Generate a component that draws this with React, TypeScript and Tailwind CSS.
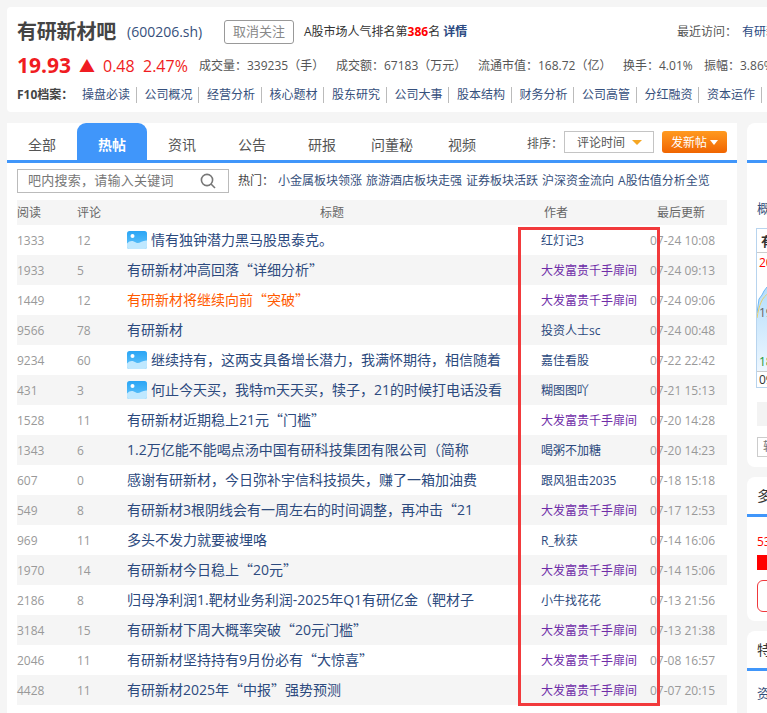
import { Fragment } from "react";

const f10Links = ["操盘必读", "公司概况", "经营分析", "核心题材", "股东研究", "公司大事", "股本结构", "财务分析", "公司高管", "分红融资", "资本运作"];
const tabs = ["全部", "热帖", "资讯", "公告", "研报", "问董秘", "视频"];
const hotLinks = ["小金属板块领涨", "旅游酒店板块走强", "证券板块活跃", "沪深资金流向", "A股估值分析全览"];

type Post = { reads: number; comments: number; title: string; author: string; time: string; pic?: boolean; hot?: boolean };

const QS = "大发富贵千手扉间";
const posts: Post[] = [
  { reads: 1333, comments: 12, title: "情有独钟潜力黑马股思泰克。", author: "红灯记3", time: "07-24 10:08", pic: true },
  { reads: 1933, comments: 5, title: "有研新材冲高回落“详细分析”", author: QS, time: "07-24 09:13" },
  { reads: 1449, comments: 12, title: "有研新材将继续向前“突破”", author: QS, time: "07-24 09:06", hot: true },
  { reads: 9566, comments: 78, title: "有研新材", author: "投资人士sc", time: "07-24 00:48" },
  { reads: 9234, comments: 60, title: "继续持有，这两支具备增长潜力，我满怀期待，相信随着", author: "嘉佳看股", time: "07-22 22:42", pic: true },
  { reads: 431, comments: 3, title: "何止今天买，我特m天天买，犊子，21的时候打电话没看", author: "糊图图吖", time: "07-21 15:13", pic: true },
  { reads: 1528, comments: 11, title: "有研新材近期稳上21元“门槛”", author: QS, time: "07-20 14:28" },
  { reads: 1343, comments: 6, title: "1.2万亿能不能喝点汤中国有研科技集团有限公司（简称", author: "喝粥不加糖", time: "07-20 14:23" },
  { reads: 607, comments: 0, title: "感谢有研新材，今日弥补宇信科技损失，赚了一箱加油费", author: "跟风狙击2035", time: "07-18 15:18" },
  { reads: 549, comments: 8, title: "有研新材3根阴线会有一周左右的时间调整，再冲击“21", author: QS, time: "07-17 12:53" },
  { reads: 969, comments: 11, title: "多头不发力就要被埋咯", author: "R_秋获", time: "07-14 16:06" },
  { reads: 1970, comments: 14, title: "有研新材今日稳上“20元”", author: QS, time: "07-14 15:06" },
  { reads: 2186, comments: 8, title: "归母净利润1.靶材业务利润-2025年Q1有研亿金（靶材子", author: "小牛找花花", time: "07-13 21:56" },
  { reads: 3184, comments: 15, title: "有研新材下周大概率突破“20元门槛”", author: QS, time: "07-13 21:38" },
  { reads: 2046, comments: 11, title: "有研新材坚持持有9月份必有“大惊喜”", author: QS, time: "07-08 16:57" },
  { reads: 4428, comments: 11, title: "有研新材2025年“中报”强势预测", author: QS, time: "07-07 20:15" },
];

// Open Sans has narrow curly quotes, the CJK font has the full width ones
function TitleText({ text }: { text: string }) {
  const parts = text.split(/([“”])/);
  return (
    <>
      {parts.map((part, i) =>
        part === "“" || part === "”" ? (
          <span key={i} lang="zh-CN" className="font-['Noto_Sans_CJK_SC']">{part}</span>
        ) : (
          <Fragment key={i}>{part}</Fragment>
        ),
      )}
    </>
  );
}

function PicIcon() {
  return (
    <svg width="20" height="18" viewBox="0 0 20 18" className="mr-[4px] shrink-0">
      <defs>
        <linearGradient id="picBg" x1="0" y1="0" x2="0" y2="1">
          <stop offset="0" stopColor="#2aa5f5" />
          <stop offset="1" stopColor="#66c6fb" />
        </linearGradient>
      </defs>
      <rect width="20" height="18" rx="2.5" fill="url(#picBg)" />
      <circle cx="5.5" cy="5" r="2" fill="#ffffff" />
      <path d="M0 12.5C3 9 6 9.5 9 11.5C12 13.5 15 9 20 9.5V15.5A2.5 2.5 0 0 1 17.5 18H2.5A2.5 2.5 0 0 1 0 15.5Z" fill="#bfe8ff" />
    </svg>
  );
}

function Header() {
  return (
    <div className="h-[105px] w-[800px] shrink-0 rounded-[4px] bg-white pl-[10px]">
      <div className="flex h-[48px] items-center pt-[1px]">
        <span className="w-[110px] text-[20px] font-bold tracking-[-0.2px] text-[#444]">有研新材吧</span>
        <span className="w-[97px] text-[14px] text-[#36507c]">(600206.sh)</span>
        <span className="flex h-[24px] w-[70px] items-center justify-center rounded-[3px] border border-[#999] text-[13px] text-[#888]">取消关注</span>
        <span className="ml-[10px] w-[373px] text-[12px] text-[#333]">
          A股市场人气排名第<b className="text-[#f00]">386</b>名 <b className="font-bold text-[#2c4a82]">详情</b>
        </span>
        <span className="w-[65px] text-[12px] text-[#555]">最近访问：</span>
        <span className="text-[12px] text-[#2c4a82]">有研新材</span>
      </div>
      <div className="flex h-[22px] items-center text-[12px] text-[#555]">
        <span className="w-[62px] text-[21px] font-bold text-[#f01c22]">19.93</span>
        <span className="w-[24px] text-[16px] leading-none text-[#f01c22]">▲</span>
        <span className="w-[40px] text-[16px] text-[#f01c22]">0.48</span>
        <span className="w-[56px] text-[16px] text-[#f01c22]">2.47%</span>
        <span className="w-[137px]">成交量：339235（手）</span>
        <span className="w-[142px]">成交额：67183（万元）</span>
        <span className="w-[145px]">流通市值：168.72（亿）</span>
        <span className="w-[81px]">换手：4.01%</span>
        <span>振幅：3.86%</span>
      </div>
      <div className="flex h-[36px] items-center text-[12px]">
        <span className="w-[65px] whitespace-nowrap font-bold text-[#444]">F10档案：</span>
        {f10Links.map((link) => (
          <span key={link} className="mr-[8px] flex h-[16px] w-[54.5px] shrink-0 items-center border-r border-[#bbb] text-[#36507c]">
            {link}
          </span>
        ))}
      </div>
    </div>
  );
}

function PostList() {
  return (
    <div className="h-[590px] w-[730px] shrink-0 bg-white">
      <div className="flex h-[40px] border-b-[3px] border-[#4096fa]">
        {tabs.map((tab) => (
          <span
            key={tab}
            className={
              tab === "热帖"
                ? "flex h-[37px] w-[70px] items-center justify-center rounded-t-[9px] bg-[#4096fa] pt-[5px] text-[14px] font-bold text-white"
                : "flex h-[37px] w-[70px] items-center justify-center pt-[5px] text-[14px] text-[#555]"
            }
          >
            {tab}
          </span>
        ))}
        <span className="ml-[30px] flex h-[37px] w-[37px] items-center pt-[5px] text-[12px] text-[#555]">排序：</span>
        <span className="mt-[8px] flex h-[22px] w-[90px] items-center border border-[#c4c4c4] pl-[12px] pt-[1px] text-[12px] text-[#555]">
          评论时间
          <span className="ml-[7px] h-0 w-0 border-x-[5px] border-t-[5px] border-x-transparent border-t-[#f5a623]" />
        </span>
        <span className="ml-[8px] mt-[8px] flex h-[22px] w-[65px] items-center justify-center gap-[3px] rounded-[3px] bg-gradient-to-b from-[#ff9a1f] to-[#f06400] pt-[1px] text-[12px] text-white">
          发新帖
          <span className="h-0 w-0 border-x-[4px] border-t-[5px] border-x-transparent border-t-white" />
        </span>
      </div>
      <div className="flex h-[37px] items-start pl-[10px] pt-[6px]">
        <div className="flex h-[24px] w-[212px] items-center justify-between border border-[#bbb] pl-[10px] pr-[12px] text-[13px] text-[#777]">
          <span className="tracking-[0.25px]">吧内搜索，请输入关键词</span>
          <svg width="16" height="16" viewBox="0 0 16 16" fill="none" stroke="#777" strokeWidth="1.6">
            <circle cx="7" cy="7" r="5.6" />
            <path d="M11 11L15 15" />
          </svg>
        </div>
        <span className="ml-[9px] flex h-[24px] w-[40px] items-center text-[12px] text-[#444]">热门：</span>
        <div className="flex h-[24px] items-center gap-[4px] text-[12px] text-[#36507c]">
          {hotLinks.map((link) => (
            <span key={link} className="whitespace-nowrap">{link}</span>
          ))}
        </div>
      </div>
      <div className="ml-[10px] w-[710px]">
        <div className="flex h-[25px] items-center bg-[#f5f5f5] pt-[1px] text-[12px] text-[#666]">
          <span className="w-[60px]">阅读</span>
          <span className="w-[50px]">评论</span>
          <span className="w-[410px] text-center">标题</span>
          <span className="w-[110px] pl-[7px]">作者</span>
          <span className="pl-[10px]">最后更新</span>
        </div>
        {posts.map((post) => (
          <div key={post.time} className="flex h-[30px] items-center pt-[1px] text-[12px] even:bg-white odd:bg-[#f5f5f5]">
            <span className="w-[60px] text-[#999]">{post.reads}</span>
            <span className="w-[50px] text-[#999]">{post.comments}</span>
            <span className={post.hot ? "mb-[2px] flex w-[414px] items-center text-[14px] text-[#ff5a00]" : "mb-[2px] flex w-[414px] items-center text-[14px] text-[#2c4a7e]"}>
              {post.pic && <PicIcon />}
              <span className="truncate">
                <TitleText text={post.title} />
              </span>
            </span>
            <span className={post.author === QS ? "w-[109px] whitespace-nowrap text-[#6f2da8]" : "w-[109px] whitespace-nowrap text-[#2c4a7e]"}>{post.author}</span>
            <span className="whitespace-nowrap text-[#999]">{post.time}</span>
          </div>
        ))}
      </div>
    </div>
  );
}

function Sidebar() {
  return (
    <div className="flex w-[200px] shrink-0 flex-col gap-[10px]">
      <div className="h-[344px] rounded-[8px] bg-white">
        <div className="h-[40px] border-b-[3px] border-[#4096fa]" />
        <div className="pl-[10px] pt-[37px] text-[13px] leading-[16px] text-[#36507c]">概念</div>
        <div className="relative ml-[9px] mt-[12px] h-[160px] border border-[#b8d4ee]">
          <span className="absolute left-[4px] top-[3px] text-[13px] font-bold text-[#333]">有研</span>
          <div className="h-[24px] border-b border-[#ccc]" />
          <svg width="190" height="118" viewBox="0 0 190 118" className="block">
            <defs>
              <linearGradient id="areaBg" x1="0" y1="0" x2="0" y2="1">
                <stop offset="0" stopColor="#b2dcfb" />
                <stop offset="1" stopColor="#eef7ff" />
              </linearGradient>
            </defs>
            <path d="M0 60L2 46L5 42L7 38L10 34L190 30V118H0Z" fill="url(#areaBg)" />
            <path d="M0 60L2 46L5 42L7 38L10 34L190 30" fill="none" stroke="#6db7f5" strokeWidth="1" />
            <path d="M0 65C2 52 5 44 12 40" fill="none" stroke="#e8cf6a" strokeWidth="1" />
          </svg>
          <span className="absolute left-[2px] top-[25px] text-[12px] text-[#f00]">20.5</span>
          <span className="absolute left-[2px] top-[75px] text-[12px] text-[#666]">19.4</span>
          <span className="absolute left-[2px] top-[124px] text-[12px] text-[#1a9a3c]">18.3</span>
          <div className="border-t border-[#ccc] pl-[2px] text-[12px] leading-[16px] text-[#333]">09:30</div>
        </div>
        <div className="ml-[10px] mt-[14px] h-[24px] bg-[#f3f3f3]" />
        <div className="ml-[10px] mt-[11px] h-[20px] border border-[#ccc] pl-[5px] text-[12px] leading-[18px] text-[#777]">转到</div>
      </div>
      <div className="h-[144px] rounded-[8px] bg-white">
        <div className="flex h-[40px] items-center border-b-[3px] border-[#4096fa] pl-[10px] text-[14px] text-[#333]">多空调查</div>
        <div className="pl-[10px] pt-[17px] text-[12px] leading-[16px] text-[#f00]">53%</div>
        <div className="ml-[10px] mt-[5px] h-[15px] w-[120px] bg-[#f00]" />
        <div className="ml-[10px] mt-[10px] h-[32px] w-[120px] rounded-[6px] border border-[#f0383c]" />
      </div>
      <div className="h-[120px] rounded-[8px] bg-white">
        <div className="flex h-[40px] items-center border-b-[3px] border-[#4096fa] pl-[10px] text-[14px] text-[#333]">特色</div>
        <div className="pl-[10px] pt-[13px] text-[13px] text-[#36507c]">资讯</div>
      </div>
    </div>
  );
}

export default function App() {
  return (
    <div
      className="relative h-[713px] w-[767px] overflow-hidden bg-[#f5f5f5] pl-[7px] pt-[7px]"
      style={{ fontFamily: '"Open Sans", "Noto Sans CJK SC", sans-serif' }}
    >
      <Header />
      <div className="mt-[11px] flex gap-[10px]">
        <PostList />
        <Sidebar />
      </div>
      {/* red highlight drawn over the author column */}
      <div className="absolute left-[518px] top-[227px] h-[479px] w-[142px] border-[3px] border-[#f23a3c]" />
    </div>
  );
}
